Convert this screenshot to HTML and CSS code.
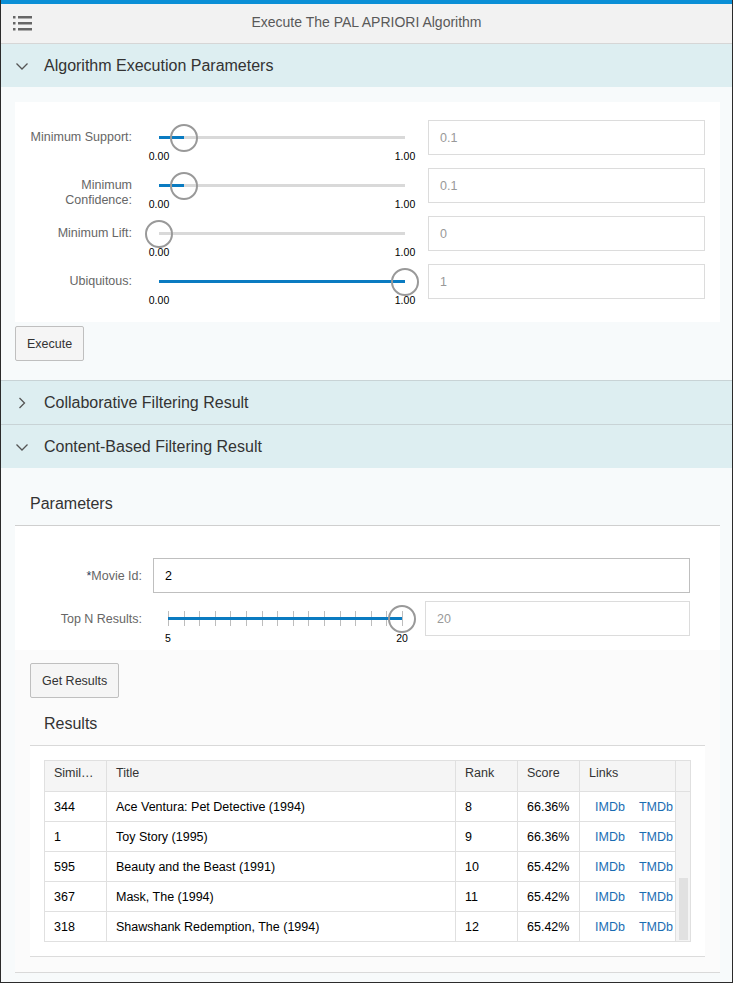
FILE: index.html
```html
<!DOCTYPE html>
<html>
<head>
<meta charset="utf-8">
<title>Execute The PAL APRIORI Algorithm</title>
<link rel="stylesheet" href="styles.css">
</head>
<body>
<div class="page">
  <div class="topline"></div>
  <header class="bar">
    <svg class="menu" width="20" height="16" viewBox="0 0 20 16">
      <rect x="0" y="0" width="2.5" height="2.5" fill="#666"/>
      <rect x="5" y="0" width="14" height="2.5" fill="#666"/>
      <rect x="0" y="6" width="2.5" height="2.5" fill="#666"/>
      <rect x="5" y="6" width="14" height="2.5" fill="#666"/>
      <rect x="0" y="12" width="2.5" height="2.5" fill="#666"/>
      <rect x="5" y="12" width="14" height="2.5" fill="#666"/>
    </svg>
    <div class="title">Execute The PAL APRIORI Algorithm</div>
    <div></div>
  </header>

  <section class="panel">
    <div class="ph">
      <svg class="chev" width="12" height="12" viewBox="0 0 12 12"><path d="M0.5 3.5 L6 9 L11.5 3.5" fill="none" stroke="#555" stroke-width="1.3"/></svg>
      <span>Algorithm Execution Parameters</span>
    </div>
    <div class="pc1">
      <div class="form1">
        <label class="lbl">Minimum Support:</label>
        <div class="slider s1">
          <div class="track"><div class="fill" style="width:10%"></div><div class="thumb" style="left:10%"></div></div>
          <span class="tl tmin">0.00</span><span class="tl tmax">1.00</span>
        </div>
        <div class="inp">0.1</div>

        <label class="lbl">Minimum Confidence:</label>
        <div class="slider s1">
          <div class="track"><div class="fill" style="width:10%"></div><div class="thumb" style="left:10%"></div></div>
          <span class="tl tmin">0.00</span><span class="tl tmax">1.00</span>
        </div>
        <div class="inp">0.1</div>

        <label class="lbl">Minimum Lift:</label>
        <div class="slider s1">
          <div class="track"><div class="fill" style="width:0%"></div><div class="thumb" style="left:0%"></div></div>
          <span class="tl tmin">0.00</span><span class="tl tmax">1.00</span>
        </div>
        <div class="inp">0</div>

        <label class="lbl">Ubiquitous:</label>
        <div class="slider s1">
          <div class="track"><div class="fill" style="width:100%"></div><div class="thumb" style="left:100%"></div></div>
          <span class="tl tmin">0.00</span><span class="tl tmax">1.00</span>
        </div>
        <div class="inp">1</div>
      </div>
      <button class="btn">Execute</button>
    </div>
  </section>

  <section class="panel">
    <div class="ph sep">
      <svg class="chev" width="12" height="12" viewBox="0 0 12 12"><path d="M3.5 1 L8.5 6 L3.5 11" fill="none" stroke="#555" stroke-width="1.3"/></svg>
      <span>Collaborative Filtering Result</span>
    </div>
  </section>

  <section class="panel grow">
    <div class="ph sep">
      <svg class="chev" width="12" height="12" viewBox="0 0 12 12"><path d="M0.5 3.5 L6 9 L11.5 3.5" fill="none" stroke="#555" stroke-width="1.3"/></svg>
      <span>Content-Based Filtering Result</span>
    </div>
    <div class="pc2">
      <div class="subpanel">
        <div class="sph">Parameters</div>
        <div class="form2">
          <label class="lbl2"><span class="req">*</span>Movie Id:</label>
          <div class="inp inp-strong wide">2</div>

          <label class="lbl2">Top N Results:</label>
          <div class="slider s2">
            <div class="ticks">
              <i></i><i></i><i></i><i></i><i></i><i></i><i></i><i></i><i></i><i></i><i></i><i></i><i></i><i></i><i></i><i></i>
            </div>
            <div class="track"><div class="fill" style="width:100%"></div><div class="thumb" style="left:100%"></div></div>
            <span class="tl tmin">5</span><span class="tl tmax">20</span>
          </div>
          <div class="inp">20</div>
        </div>
        <div class="spc">
          <button class="btn">Get Results</button>
          <div class="results">
            <div class="rh">Results</div>
            <div class="rc">
              <table class="tbl">
                <colgroup>
                  <col class="c-id"><col class="c-title"><col class="c-num"><col class="c-num"><col class="c-links"><col class="c-sb">
                </colgroup>
                <thead>
                  <tr><th>Simil…</th><th>Title</th><th>Rank</th><th>Score</th><th>Links</th><th class="sbh"></th></tr>
                </thead>
                <tbody>
                  <tr><td>344</td><td>Ace Ventura: Pet Detective (1994)</td><td>8</td><td>66.36%</td><td><div class="links"><a>IMDb</a><a>TMDb</a></div></td><td class="sb" rowspan="5"><div class="sbthumb"></div></td></tr>
                  <tr><td>1</td><td>Toy Story (1995)</td><td>9</td><td>66.36%</td><td><div class="links"><a>IMDb</a><a>TMDb</a></div></td></tr>
                  <tr><td>595</td><td>Beauty and the Beast (1991)</td><td>10</td><td>65.42%</td><td><div class="links"><a>IMDb</a><a>TMDb</a></div></td></tr>
                  <tr><td>367</td><td>Mask, The (1994)</td><td>11</td><td>65.42%</td><td><div class="links"><a>IMDb</a><a>TMDb</a></div></td></tr>
                  <tr><td>318</td><td>Shawshank Redemption, The (1994)</td><td>12</td><td>65.42%</td><td><div class="links"><a>IMDb</a><a>TMDb</a></div></td></tr>
                </tbody>
              </table>
            </div>
          </div>
        </div>
      </div>
    </div>
  </section>
</div>
</body>
</html>
```
FILE: styles.css
```css
* { box-sizing: border-box; }

body {
  margin: 0;
  font-family: "Liberation Sans", Arial, sans-serif;
  font-size: 12.5px;
  color: #333;
  background: #fff;
}

.page {
  width: 733px;
  height: 983px;
  border: 1px solid #2b2b2b;
  border-top: 0;
  background: #f7fafb;
  display: flex;
  flex-direction: column;
  overflow: hidden;
}

.topline {
  flex: none;
  height: 4px;
  background: #0a8fd6;
}

.bar {
  flex: none;
  height: 40px;
  background: #f2f2f2;
  border-bottom: 1px solid #d6d6d6;
  display: grid;
  grid-template-columns: 1fr auto 1fr;
  align-items: center;
}

.menu {
  display: block;
  margin-left: 12px;
}

.title {
  font-size: 14px;
  color: #595959;
  margin-bottom: 4px;
}

.panel { flex: none; }
.panel.grow { flex: 1; display: flex; flex-direction: column; }

.ph {
  height: 43px;
  background: #ddeef1;
  display: flex;
  align-items: center;
  padding-left: 15px;
  font-size: 16px;
  color: #333;
}

.ph.sep {
  height: 44px;
  border-top: 1px solid #c8d3d6;
}

.chev {
  display: block;
  flex: none;
  margin-right: 16px;
}

/* ---------- panel 1 ---------- */
.pc1 {
  height: 293px;
  padding: 15px 12px 19px 14px;
}

.form1 {
  background: #fff;
  padding: 18px 15px 23px 7px;
  display: grid;
  grid-template-columns: 114px 270px 1fr;
  grid-auto-rows: 35px;
  column-gap: 11px;
  row-gap: 13px;
}

.lbl {
  text-align: right;
  padding-right: 4px;
  padding-top: 10px;
  line-height: 15px;
  color: #666;
}

.inp {
  height: 35px;
  border: 1px solid #dcdcdc;
  background: #fff;
  padding-left: 11px;
  display: flex;
  align-items: center;
  color: #999;
}

.inp-strong {
  border-color: #bfbfbf;
  color: #000;
}

.wide { grid-column: 2 / 4; }

/* ---------- slider ---------- */
.slider {
  position: relative;
  height: 35px;
}

.s1 { padding: 0 12px; }
.s2 { padding: 0 12px 0 15px; }

.track {
  position: relative;
  top: 16px;
  height: 3px;
  background: #d9d9d9;
}

.fill {
  height: 100%;
  background: #0a7bc1;
}

.thumb {
  position: absolute;
  top: 50%;
  width: 28px;
  height: 28px;
  border: 2px solid #999;
  border-radius: 50%;
  transform: translate(-50%, -50%);
}

.tl {
  position: absolute;
  top: 30px;
  font-size: 10.5px;
  line-height: 12px;
  color: #000;
  transform: translateX(-50%);
}

.s1 .tmin { left: 12px; }
.s1 .tmax { left: calc(100% - 12px); }
.s2 .tmin { left: 15px; }
.s2 .tmax { left: calc(100% - 12px); }
.s2 .tl { top: 31px; }

.ticks {
  position: absolute;
  left: 15px;
  right: 11px;
  top: 10px;
  height: 15px;
  display: flex;
  justify-content: space-between;
}

.ticks i {
  display: block;
  width: 1px;
  height: 15px;
  background: #bdbdbd;
}

.btn {
  display: block;
  height: 35px;
  padding: 0 11px;
  margin-top: 4px;
  border: 1px solid #bfbfbf;
  border-radius: 2px;
  background: #f5f5f5;
  font-family: inherit;
  font-size: 12.5px;
  color: #333;
}

/* ---------- panel 3 ---------- */
.pc2 {
  flex: 1;
  padding: 15px 12px 0 14px;
}

.subpanel {
  border-bottom: 1px solid #d9d9d9;
}

.sph {
  height: 43px;
  border-bottom: 1px solid #cfcfcf;
  padding-left: 15px;
  display: flex;
  align-items: center;
  font-size: 16px;
  color: #333;
}

.form2 {
  background: #fff;
  padding: 32px 30px 14px 15px;
  display: grid;
  grid-template-columns: 112px 261px 1fr;
  grid-auto-rows: 35px;
  column-gap: 11px;
  row-gap: 8px;
}

.lbl2 {
  text-align: right;
  align-self: center;
  color: #666;
}

.req { color: #2b3d5b; }

.spc {
  background: #fbfbfb;
  padding: 13px 15px 15px 15px;
}

.spc .btn { margin-top: 0; }

.results { margin-top: 5px; }

.rh {
  height: 43px;
  border-bottom: 1px solid #d9d9d9;
  padding-left: 14px;
  display: flex;
  align-items: center;
  font-size: 16px;
  color: #333;
}

.rc {
  background: #fff;
  padding: 14px 15px 14px 14px;
  border-bottom: 1px solid #dcdcdc;
}

.tbl {
  width: 646px;
  table-layout: fixed;
  border-collapse: collapse;
  font-size: 12.5px;
}

.c-id { width: 62px; }
.c-title { width: 349px; }
.c-num { width: 62px; }
.c-links { width: 96px; }
.c-sb { width: 15px; }

.tbl th, .tbl td {
  border: 1px solid #e0e0e0;
  padding: 0 9px;
  text-align: left;
  white-space: nowrap;
  overflow: hidden;
}

.tbl th {
  height: 31px;
  background: #f5f5f5;
  font-weight: normal;
  color: #333;
  vertical-align: top;
  padding-top: 5px;
  line-height: 15px;
}

.tbl td {
  height: 30px;
  color: #000;
  vertical-align: middle;
}

.tbl .sbh { padding: 0; }

.tbl td.sb {
  padding: 0;
  background: #f4f4f4;
  vertical-align: top;
  border-top: 1px solid #e0e0e0;
}

.sbthumb {
  margin: 86px 2px 0 3px;
  height: 62px;
  background: #e1e1e1;
}

.links {
  display: flex;
  gap: 14px;
  padding-left: 6px;
}

.links a {
  color: #1a6db3;
  text-decoration: none;
}
```
